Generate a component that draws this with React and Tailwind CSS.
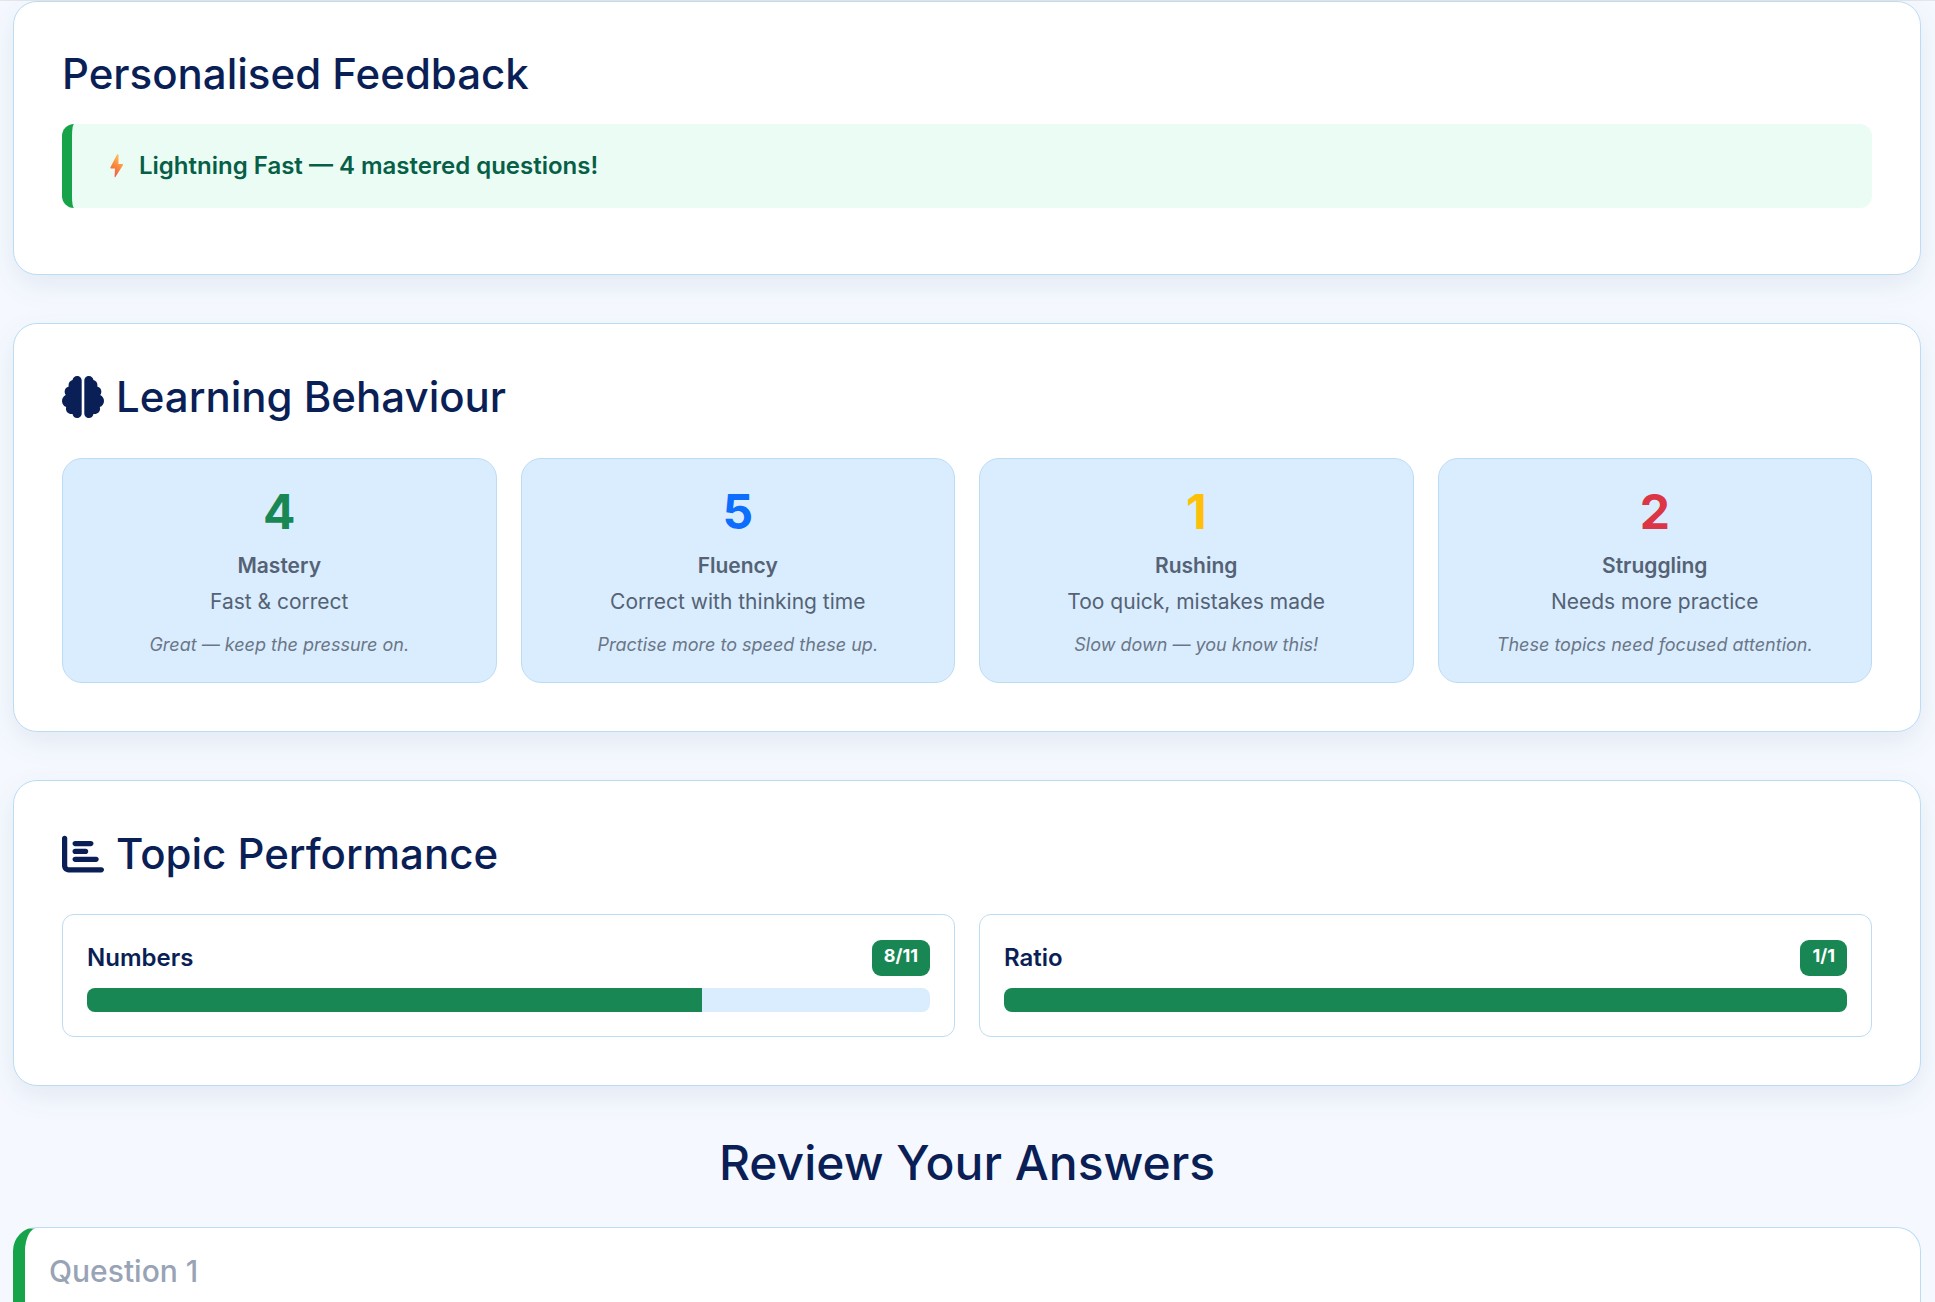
import { FaBrain, FaChartBar } from "react-icons/fa6";

const behaviours = [
  { count: 4, color: "text-[#198754]", label: "Mastery", desc: "Fast & correct", tip: "Great — keep the pressure on." },
  { count: 5, color: "text-[#0d6efd]", label: "Fluency", desc: "Correct with thinking time", tip: "Practise more to speed these up." },
  { count: 1, color: "text-[#ffc107]", label: "Rushing", desc: "Too quick, mistakes made", tip: "Slow down — you know this!" },
  { count: 2, color: "text-[#dc3545]", label: "Struggling", desc: "Needs more practice", tip: "These topics need focused attention." },
];

const topics = [
  { name: "Numbers", score: "8/11", pct: 73 },
  { name: "Ratio", score: "1/1", pct: 100 },
];

function Bolt() {
  return (
    <svg viewBox="0 0 14 24" className="w-[14px] h-[24px] shrink-0">
      <defs>
        <linearGradient id="bolt" x1="0.7" y1="0" x2="0.3" y2="1">
          <stop offset="0" stopColor="#ffc766" />
          <stop offset="0.5" stopColor="#fb8a3c" />
          <stop offset="1" stopColor="#ef5350" />
        </linearGradient>
      </defs>
      <path d="M7 0.4 Q8.6 -0.2 8.6 1.2 L8.4 10 L12.4 10 Q13.5 10.2 12.9 11.2 L5.4 23 Q4.6 23.8 4.6 22.8 L5 14.5 L1 14.5 Q-0.1 14.3 0.5 13.2 Z" fill="url(#bolt)" />
    </svg>
  );
}

function Card({ children, className = "" }) {
  return (
    <section className={`bg-white border border-[#bcdcf4] rounded-[24px] p-12 shadow-[0_10px_30px_rgba(13,38,89,0.08)] ${className}`}>
      {children}
    </section>
  );
}

export default function App() {
  return (
    <div className="h-[1302px] overflow-hidden bg-[#f5f9ff] font-['Inter',sans-serif] text-[#0a1f56]">
      <div className="h-px bg-[#e4e6e9]" />
      <div className="pl-[13px] pr-[14px]">
        <Card className="h-[274px]">
          <h2 className="text-[42px] leading-[50px] font-medium mb-[25px] -mt-[1px]">Personalised Feedback</h2>
          <div className="h-[84px] flex items-center gap-[15px] pl-[38px] bg-[#ebfcf5] border-l-[10px] border-[#16a34a] rounded-[12px] text-[24px] font-semibold text-[#065f46]">
            <Bolt />
            <span>Lightning Fast — 4 mastered questions!</span>
          </div>
        </Card>

        <Card className="mt-[48px] h-[409px]">
          <h2 className="flex items-center gap-[12px] text-[42px] leading-[50px] font-medium mb-[36px]">
            <FaBrain className="w-[42px] h-[42px]" />
            Learning Behaviour
          </h2>
          <div className="grid grid-cols-4 gap-[24px]">
            {behaviours.map((b) => (
              <div key={b.label} className="h-[225px] bg-[#d9edff] border border-[#bcdcf4] rounded-[20px] pt-[24px] text-center">
                <div className={`text-[48px] leading-[58px] font-bold ${b.color}`}>{b.count}</div>
                <div className="mt-[10px] text-[21px] leading-[30px] font-semibold text-[#556274]">{b.label}</div>
                <div className="mt-[6px] text-[21px] leading-[30px] text-[#556274]">{b.desc}</div>
                <div className="mt-[14px] text-[18px] leading-[27px] italic text-[#6b7686]">{b.tip}</div>
              </div>
            ))}
          </div>
        </Card>

        <Card className="mt-[48px] h-[306px]">
          <h2 className="flex items-center gap-[12px] text-[42px] leading-[50px] font-medium mb-[35px]">
            <FaChartBar className="w-[42px] h-[42px]" />
            Topic Performance
          </h2>
          <div className="grid grid-cols-2 gap-[24px]">
            {topics.map((t) => (
              <div key={t.name} className="h-[123px] border border-[#bcdcf4] rounded-[12px] px-[24px] pt-[25px]">
                <div className="flex justify-between items-center h-[36px]">
                  <span className="text-[24px] font-semibold">{t.name}</span>
                  <span className="h-[36px] px-[12px] pb-[5px] flex items-center bg-[#198754] text-white text-[18px] font-bold rounded-[9px]">{t.score}</span>
                </div>
                <div className="mt-[12px] h-[24px] bg-[#d9edff] rounded-[8px] overflow-hidden">
                  <div className="h-full bg-[#198754]" style={{ width: `${t.pct}%` }} />
                </div>
              </div>
            ))}
          </div>
        </Card>

        <h1 className="mt-[48px] text-center text-[48px] leading-[58px] font-medium">Review Your Answers</h1>

        <div className="mt-[35px] h-[200px] bg-white border border-[#bcdcf4] border-l-[12px] border-l-[#16a34a] rounded-[24px] pl-[24px] pt-[21px]">
          <div className="text-[30px] leading-[44px] font-medium text-[#98a3b5]">Question 1</div>
        </div>
      </div>
    </div>
  );
}
